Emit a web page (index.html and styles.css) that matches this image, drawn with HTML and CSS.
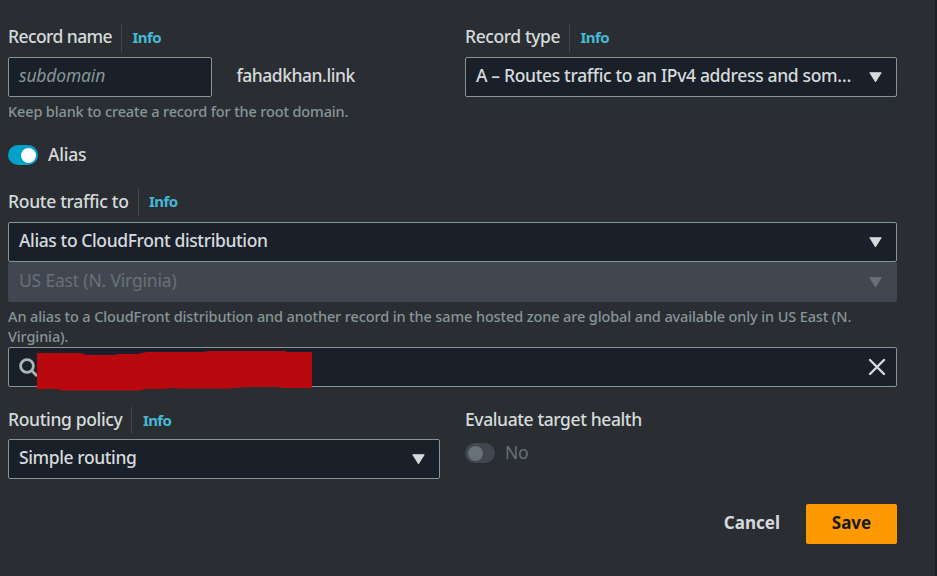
FILE: index.html
```html
<!DOCTYPE html>
<html lang="en">
<head>
<meta charset="utf-8">
<title>Edit record</title>
<link rel="stylesheet" href="styles.css">
</head>
<body>
<main class="panel">
  <div class="columns">
    <section>
      <div class="label"><span class="name t-record-name">Record name</span><a class="info">Info</a></div>
      <div class="name-row">
        <div class="field short"><span class="placeholder">subdomain</span></div>
        <span class="domain">fahadkhan.link</span>
      </div>
      <p class="hint">Keep blank to create a record for the root domain.</p>
    </section>
    <section>
      <div class="label"><span class="name t-record-type">Record type</span><a class="info">Info</a></div>
      <div class="field"><span class="value t-type">A – Routes traffic to an IPv4 address and som…</span><svg class="caret" viewBox="0 0 13 11"><path d="M1 .8H12L6.5 9.5Z"/></svg></div>
    </section>
  </div>
  <div class="toggle-row alias"><span class="toggle on"></span><span class="t-alias">Alias</span></div>
  <section class="route">
    <div class="label"><span class="name t-route">Route traffic to</span><a class="info">Info</a></div>
    <div class="field"><span class="value t-cloudfront">Alias to CloudFront distribution</span><svg class="caret" viewBox="0 0 13 11"><path d="M1 .8H12L6.5 9.5Z"/></svg></div>
    <div class="field disabled"><span class="value t-region">US East (N. Virginia)</span><svg class="caret" viewBox="0 0 13 11"><path d="M1 .8H12L6.5 9.5Z"/></svg></div>
    <p class="hint long">An alias to a CloudFront distribution and another record in the same hosted zone are global and available only in US East (N.<br>Virginia).</p>
    <div class="field search">
      <svg class="lens" viewBox="0 0 20 20"><circle cx="8" cy="8" r="6.4"/><path d="M12.6 12.6L18 18"/></svg>
      <svg class="close" viewBox="0 0 18 18"><path d="M2 2L16 16M16 2L2 16"/></svg>
      <svg class="redaction" viewBox="0 0 275 40"><path d="M0 2H43L50 4H78L82 3H100L110 1H166L172 0H248L250 1H275V37H247L242 36H212L190 37.5H143L138 37L122 38H108L103 39.5H26L20 38H0Z"/></svg>
    </div>
  </section>
  <div class="columns policy">
    <section>
      <div class="label"><span class="name t-policy">Routing policy</span><a class="info">Info</a></div>
      <div class="field"><span class="value t-simple">Simple routing</span><svg class="caret" viewBox="0 0 13 11"><path d="M1 .8H12L6.5 9.5Z"/></svg></div>
    </section>
    <section>
      <div class="label"><span class="t-health">Evaluate target health</span></div>
      <div class="toggle-row health"><span class="toggle off"></span><span class="t-no">No</span></div>
    </section>
  </div>
  <div class="actions"><button class="cancel">Cancel</button><button class="save">Save</button></div>
</main>
</body>
</html>
```
FILE: styles.css
```css
* { box-sizing: border-box; }
body {
  margin: 0;
  background: #2a2e33;
  color: #d5dbdb;
  font: 500 17.5px/25px "Noto Sans", sans-serif;
  letter-spacing: -0.4px;
  white-space: nowrap;
}
p { margin: 0; }
.panel {
  width: 937px;
  height: 576px;
  padding: 24px 38px 0 8px;
  border-right: 2px solid #1b2029;
  overflow: hidden;
}
.columns {
  display: grid;
  grid-template-columns: 432px 432px;
  column-gap: 25px;
}
.label {
  display: flex;
  height: 28px;
  margin-bottom: 5px;
}
.info {
  margin-left: 9px;
  padding-left: 10.5px;
  border-left: 1px solid #41474f;
  color: #44b9d6;
  font-size: 15px;
  font-weight: 700;
  line-height: 27px;
  letter-spacing: -0.6px;
}
.t-record-name { letter-spacing: -0.58px; }
.t-record-type { letter-spacing: -0.42px; }
.t-type { letter-spacing: -0.34px; }
.t-alias { letter-spacing: -0.2px; }
.t-route { letter-spacing: -0.31px; line-height: 27px; }
.t-region { letter-spacing: -0.18px; }
.t-policy { letter-spacing: -0.35px; }
.field {
  display: flex;
  align-items: center;
  height: 40px;
  padding: 0 14px 3px 10px;
  border: 1px solid #879596;
  border-radius: 2px;
  background: #1a202a;
}
.value { flex: 1; min-width: 0; padding-bottom: 1px; }
.caret { flex: none; width: 13px; height: 11px; margin-top: 3px; fill: #d5dbdb; stroke: #d5dbdb; stroke-width: 1.2; stroke-linejoin: round; }
.name-row { display: flex; align-items: center; gap: 24.5px; }
.short { width: 204px; }
.placeholder { color: #879596; font-style: italic; font-weight: 400; letter-spacing: -0.17px; }
.domain { padding-bottom: 4px; letter-spacing: -0.47px; }
.hint { color: #879596; font-size: 14.5px; line-height: 20px; letter-spacing: -0.14px; margin-top: 4px; margin-bottom: 1px; }
.long { letter-spacing: -0.12px; }
.toggle-row { display: flex; align-items: center; gap: 10px; }
.t-alias, .t-no { padding-bottom: 1px; }
.alias { margin-top: 20px; height: 26px; }
.toggle { width: 30px; height: 20px; border-radius: 10px; padding: 2.5px 3px; }
.toggle::before { content: ""; display: block; width: 15px; height: 15px; border-radius: 50%; }
.on { background: #00a1c9; }
.on::before { margin-left: 10px; background: #fff; }
.off { background: #414750; }
.off::before { background: #687078; }
.route { margin-top: 20px; }
.route .label { margin-bottom: 6px; }
.disabled { background: #414750; border-color: #414750; color: #687078; font-weight: 400; }
.disabled .caret { fill: #687078; stroke: #687078; }
.search { position: relative; justify-content: space-between; padding-bottom: 0; padding-right: 10px; }
.lens { width: 20px; height: 20px; margin-top: 1px; fill: none; stroke: #aab7b8; stroke-width: 2.8; }
.close { width: 18px; height: 18px; fill: none; stroke: #d5dbdb; stroke-width: 2.4; stroke-linecap: round; }
.redaction { position: absolute; left: 28px; top: 3px; width: 275px; height: 40px; fill: #b9090e; }
.policy { margin-top: 20px; }
.policy .label { height: 27px; }
.health { height: 28px; color: #687078; font-weight: 400; }
.actions { display: flex; justify-content: flex-end; margin-top: 25px; gap: 26px; }
button { margin: 0; padding: 0 0 3px; border: 0; background: none; color: #d5dbdb; font: 700 17px/37px "Noto Sans", sans-serif; height: 40px; }
.save { width: 91px; border-radius: 2px; background: #ff9900; color: #16191f; }
```
